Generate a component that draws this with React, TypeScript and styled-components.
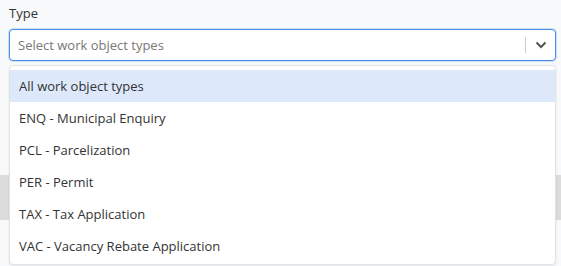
import React from "react";
import styled, { createGlobalStyle } from "styled-components";

const Global = createGlobalStyle`
  html, body { margin: 0; padding: 0; background: #f8f9fb; }
  body { font-family: "Open Sans", "Liberation Sans", sans-serif; }
`;

const Page = styled.div`
  position: relative;
  width: 561px;
  height: 266px;
  overflow: hidden;
`;

const Field = styled.div`
  padding: 4px 5px 0 9px;
  display: flex;
  flex-direction: column;
`;

const Label = styled.label`
  font-size: 13px;
  line-height: 18px;
  color: #333;
  margin-bottom: 7px;
`;

const Control = styled.div`
  position: relative;
  height: 32px;
  box-sizing: border-box;
  border: 1px solid #4a8fe7;
  border-radius: 4px;
  background: #fff;
  display: flex;
  align-items: center;
  box-shadow: 0 0 0 1px rgba(74, 143, 231, 0.25);
`;

const Placeholder = styled.div`
  flex: 1;
  padding-left: 8px;
  font-size: 13px;
  color: #777;
`;

const Separator = styled.span`
  width: 1px;
  height: 16px;
  background: #ccc;
`;

const Indicator = styled.div`
  width: 29px;
  display: flex;
  justify-content: center;
  align-items: center;
  color: #555;
`;

const BehindBar = styled.div`
  position: absolute;
  left: 0;
  right: 0;
  top: 175px;
  height: 45px;
  background: #dcdcdc;
`;

const Menu = styled.div`
  position: absolute;
  left: 9px;
  top: 65px;
  width: 547px;
  box-sizing: border-box;
  background: #fff;
  border: 1px solid #e3e3e3;
  border-radius: 4px;
  padding: 4px 0 2px;
  box-shadow: 0 1px 3px rgba(0, 0, 0, 0.08);
`;

const Option = styled.div<{ $active?: boolean }>`
  height: 32px;
  display: flex;
  align-items: center;
  padding-left: 9px;
  font-size: 13px;
  color: #333;
  background: ${(p) => (p.$active ? "#dde9fb" : "transparent")};
`;

const options = [
  "All work object types",
  "ENQ - Municipal Enquiry",
  "PCL - Parcelization",
  "PER - Permit",
  "TAX - Tax Application",
  "VAC - Vacancy Rebate Application",
];

export default function App() {
  return (
    <Page>
      <Global />
      <BehindBar />
      <Field>
        <Label>Type</Label>
        <Control>
          <Placeholder>Select work object types</Placeholder>
          <Separator />
          <Indicator>
            <svg width="12" height="8" viewBox="0 0 12 8" fill="none">
              <path d="M1.5 1.5 L6 6 L10.5 1.5" stroke="currentColor" strokeWidth="2" />
            </svg>
          </Indicator>
        </Control>
      </Field>
      <Menu>
        {options.map((o, i) => (
          <Option key={o} $active={i === 0}>
            {o}
          </Option>
        ))}
      </Menu>
    </Page>
  );
}
